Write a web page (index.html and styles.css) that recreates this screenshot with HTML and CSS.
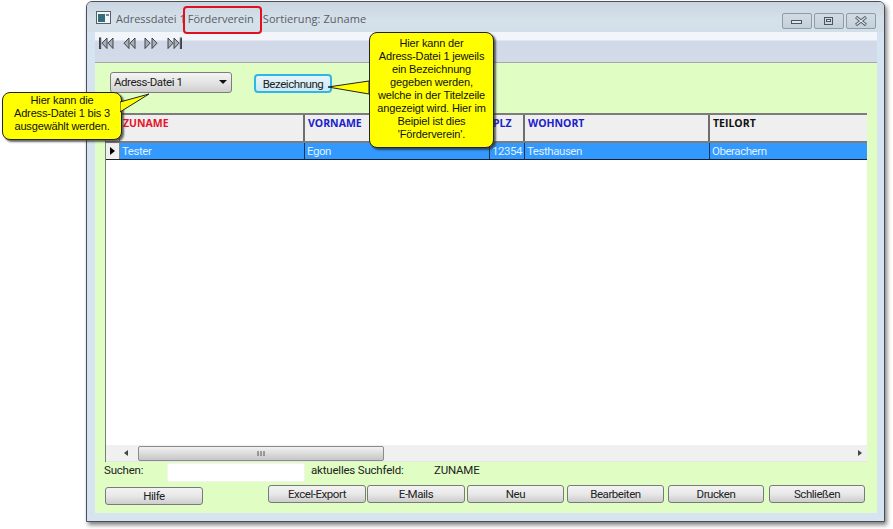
FILE: index.html
```html
<!DOCTYPE html>
<html lang="de">
<head>
<meta charset="utf-8">
<title>Adressdatei</title>
<link rel="stylesheet" href="styles.css">
</head>
<body>
<div class="window">
  <div class="titlebar">
    <svg class="appicon" width="16" height="14" viewBox="0 0 16 14"><rect x="0.5" y="0.5" width="14" height="12" fill="#f4f6f8" stroke="#56606a"/><rect x="2" y="3" width="7" height="8" fill="#2f6f78"/><rect x="10" y="3" width="3" height="2" fill="#7c8790"/></svg>
    <span class="title">Adressdatei 1</span>
    <span class="title t2">Förderverein</span>
    <span class="title t3">Sortierung: Zuname</span>
    <div class="winbtns">
      <div class="winbtn"><svg width="12" height="8" viewBox="0 0 12 8"><rect x="0.5" y="3.5" width="10" height="3" fill="#dfe5ea" stroke="#4b5660"/></svg></div>
      <div class="winbtn"><svg width="12" height="10" viewBox="0 0 12 10"><rect x="1.5" y="1.5" width="8" height="7" fill="none" stroke="#4b5660"/><rect x="3.5" y="3.5" width="4" height="2" fill="#dfe5ea" stroke="#4b5660"/></svg></div>
      <div class="winbtn"><svg width="14" height="10" viewBox="0 0 14 10"><path d="M2 1 L12 9 M12 1 L2 9" stroke="#4b5660" stroke-width="3" fill="none"/><path d="M2.5 1.5 L11.5 8.5 M11.5 1.5 L2.5 8.5" stroke="#e4eaef" stroke-width="1.2" fill="none"/></svg></div>
    </div>
  </div>
  <div class="toolbar">
    <svg class="navicon" width="86" height="13" viewBox="0 0 86 13">
      <g fill="#aab0b8" stroke="#30353b" stroke-width="0.9">
        <rect x="1.5" y="1" width="1.2" height="10.5"/>
        <path d="M9 1 L4 6.2 L9 11.5 Z"/><path d="M15 1 L10 6.2 L15 11.5 Z"/>
        <path d="M31 1 L26 6.2 L31 11.5 Z"/><path d="M37 1 L32 6.2 L37 11.5 Z"/>
        <path d="M47 1 L52 6.2 L47 11.5 Z"/><path d="M54 1 L59 6.2 L54 11.5 Z"/>
        <path d="M70 1 L75 6.2 L70 11.5 Z"/><path d="M76 1 L81 6.2 L76 11.5 Z"/>
        <rect x="82.3" y="1" width="1.2" height="10.5"/>
      </g>
    </svg>
  </div>
  <div class="content">
    <div class="controls">
      <div class="select"><span>Adress-Datei 1</span><i class="caret"></i></div>
      <div class="btn btn-focus">Bezeichnung</div>
    </div>
    <div class="grid">
      <div class="cols head">
        <div class="rowhead"></div>
        <div class="cell c1 red">ZUNAME</div>
        <div class="cell c2 blue">VORNAME</div>
        <div class="cell c3 blue">PLZ</div>
        <div class="cell c4 blue">WOHNORT</div>
        <div class="cell c5 dark">TEILORT</div>
      </div>
      <div class="cols row">
        <div class="rowhead"><i class="pointer"></i></div>
        <div class="cell c1">Tester</div>
        <div class="cell c2">Egon</div>
        <div class="cell c3">12354</div>
        <div class="cell c4">Testhausen</div>
        <div class="cell c5">Oberachern</div>
      </div>
      <div class="gridbody"></div>
      <div class="hscroll">
        <i class="arrow-l"></i>
        <div class="thumb">
          <svg width="9" height="7" viewBox="0 0 9 7"><path d="M1 1v5M4 1v5M7 1v5" stroke="#555" fill="none"/></svg>
        </div>
        <i class="arrow-r"></i>
      </div>
    </div>
    <div class="searchrow">
      <span class="lbl-search">Suchen:</span>
      <div class="input"></div>
      <span class="lbl-field">aktuelles Suchfeld:</span>
      <span class="lbl-value">ZUNAME</span>
    </div>
    <div class="buttons">
      <div class="btn b-help">Hilfe</div>
      <div class="btn b-a">Excel-Export</div>
      <div class="btn b-b">E-Mails</div>
      <div class="btn b-c">Neu</div>
      <div class="btn b-d">Bearbeiten</div>
      <div class="btn b-e">Drucken</div>
      <div class="btn b-f">Schließen</div>
    </div>
  </div>
</div>

<div class="redbox"></div>

<svg class="tail tail1" width="40" height="22" viewBox="0 0 40 22"><path d="M0 9 L29 1 L0 19 Z" fill="#ffff00" stroke="#222" stroke-width="1"/></svg>
<div class="callout call1">Hier kann die<br>Adress-Datei 1 bis 3<br>ausgewählt werden.</div>
<svg class="tail tail2" width="44" height="16" viewBox="0 0 44 16"><path d="M42 1 L1 7 L42 14 Z" fill="#ffff00" stroke="#222" stroke-width="1"/></svg>
<div class="callout call2">Hier kann der<br>Adress-Datei 1 jeweils<br>ein Bezeichnung<br>gegeben werden,<br>welche in der Titelzeile<br>angezeigt wird. Hier im<br>Beipiel ist dies<br>'Förderverein'.</div>
</body>
</html>
```
FILE: styles.css
```css
* { box-sizing: border-box; }
html, body { margin: 0; height: 100%; }
body {
  background: #fff;
  font-family: Roboto, "Liberation Sans", Arial, sans-serif;
  font-size: 11.5px;
  letter-spacing: -.45px;
  color: #222;
  overflow: hidden;
  padding: 1px 0 0 86px;
}
.window {
  width: 799px;
  height: 521px;
  border: 1px solid #4a4f55;
  border-radius: 6px 6px 0 0;
  background: #d6e3f0;
  box-shadow: 2px 3px 4px rgba(60,60,60,.65);
  display: flex;
  flex-direction: column;
  padding: 0 7px 8px 8px;
}
.titlebar {
  height: 30px;
  margin: 0 -7px 0 -8px;
  padding: 0 8px 0 9px;
  display: flex;
  align-items: center;
  border-radius: 5px 5px 0 0;
  background: linear-gradient(#c9d6e2, #d6e0e9 60%, #d2dfe9);
  flex: none;
}
.appicon { margin-right: 4px; margin-top: 2px; }
.title {
  font-family: "Open Sans", sans-serif;
  font-size: 11px;
  letter-spacing: 0;
  color: #555d66;
  white-space: nowrap;
  padding-top: 3px;
}
.t2 { margin-left: 2px; }
.t3 { margin-left: 9px; letter-spacing: .08px; }
.winbtns { margin-left: auto; display: flex; gap: 2px; align-self: flex-start; margin-top: 11px; }
.winbtn {
  width: 30px;
  height: 16px;
  border: 1px solid #8f9ba6;
  border-radius: 2px;
  background: linear-gradient(#d2dbe3, #c3d0db);
  display: flex;
  align-items: center;
  justify-content: center;
}
.toolbar {
  height: 31px;
  flex: none;
  background: linear-gradient(#f2f5f9 0, #f2f5f9 8px, #d1d9e9 9px, #d3dbe9 100%);
  border-bottom: 1px solid #a3a8ae;
  display: flex;
  align-items: center;
  padding: 0 0 8px 3px;
}
.content {
  flex: 1;
  background: #e0fdc4;
  padding: 9px 11px 0 10px;
  display: flex;
  flex-direction: column;
  min-height: 0;
}
.controls { display: flex; align-items: flex-start; height: 41px; flex: none; padding-left: 5px; }
.select {
  width: 122px;
  height: 21px;
  border: 1px solid #7d7d7d;
  border-radius: 3px;
  background: linear-gradient(#f4f4f4, #e4e4e4 50%, #cfcfcf);
  display: flex;
  align-items: center;
  justify-content: space-between;
  padding: 0 4px 1px 3px;
}
.caret {
  width: 0; height: 0;
  border: 4px solid transparent;
  border-top: 4px solid #111;
  border-bottom: 0;
}
.btn {
  height: 18px;
  border: 1px solid #7a7a7a;
  border-radius: 3px;
  background: linear-gradient(#f3f3f3, #e8e8e8 50%, #cdcdcd);
  display: flex;
  align-items: center;
  justify-content: center;
  color: #222;
  flex: none;
}
.btn-focus {
  width: 78px;
  margin: 2px 0 0 22px;
  border: 2px solid #31b4e6;
  border-radius: 4px;
  background: linear-gradient(#e6f5fb, #cde9f5);
  height: 19px;
}
.grid {
  height: 349px;
  flex: none;
  border-top: 2px solid #7c7c7c;
  border-left: 1px solid #7c7c7c;
  background: #fff;
  display: flex;
  flex-direction: column;
  width: 762px;
}
.cols { display: flex; flex: none; }
.head { height: 28px; background: #efefef; border-bottom: 2px solid #7c7c7c; }
.row { height: 17px; background: #3399ff; color: #dff0ff; border-bottom: 1px solid #123; }
.rowhead { width: 14px; flex: none; background: #efefef; border-right: 1px solid #8a8a8a; display: flex; align-items: center; justify-content: center; }
.cell { padding: 0 0 0 3px; border-right: 2px solid #6e6e6e; white-space: nowrap; overflow: hidden; }
.row .cell { border-right: 1px solid #143456; line-height: 17px; padding-left: 2px; }
.head .cell { font-weight: bold; font-family: "Open Sans", sans-serif; font-size: 10.5px; letter-spacing: 0; line-height: 14px; padding-top: 1px; }
.red { color: #e8142a; }
.blue { color: #1c20cc; }
.dark { color: #111; }
.c1 { width: 185px; }
.c2 { width: 185px; }
.c3 { width: 35px; }
.c4 { width: 185px; }
.c5 { flex: 1; border-right: 0; }
.row .c5 { border-right: 0; }
.pointer { width: 0; height: 0; border: 4px solid transparent; border-left: 5px solid #000; border-right: 0; }
.gridbody { flex: 1; background: #fff; }
.hscroll {
  height: 17px;
  flex: none;
  background: #f0f0f0;
  display: flex;
  align-items: center;
  padding-left: 32px;
  position: relative;
  border-bottom: 1px solid #e6e6e6;
}
.thumb {
  width: 246px;
  height: 15px;
  border: 1px solid #8b8b8b;
  border-radius: 2px;
  background: linear-gradient(#f1f1f1, #dcdcdc 50%, #c6c6c6);
  display: flex;
  align-items: center;
  justify-content: center;
}
.arrow-l { width: 0; height: 0; border: 3.5px solid transparent; border-right: 4px solid #444; border-left: 0; position: absolute; left: 18px; top: 5px; }
.arrow-r { width: 0; height: 0; border: 3.5px solid transparent; border-left: 4px solid #444; border-right: 0; position: absolute; right: 5px; top: 5px; }
.searchrow { height: 22px; flex: none; display: flex; align-items: flex-start; padding-top: 1px; margin-left: -1px; line-height: 15px; letter-spacing: -.2px; }
.lbl-search { width: 63px; flex: none; }
.input { width: 138px; height: 19px; background: #fff; border: 1px solid #f0f6e8; border-radius: 2px; flex: none; }
.lbl-field { margin-left: 6px; width: 123px; flex: none; }
.buttons { display: flex; align-items: flex-start; height: 24px; flex: none; padding-top: 1px; }
.b-help { width: 98px; margin-top: 2px; margin-right: 65px; }
.b-a { width: 98px; }
.b-b { width: 98px; margin-left: 1px; }
.b-c { width: 97px; margin-left: 2px; }
.b-d { width: 97px; margin-left: 3px; }
.b-e { width: 96px; margin-left: 4px; }
.b-f { width: 96px; margin-left: 5px; }

.redbox {
  position: absolute;
  left: 183px;
  top: 6px;
  width: 79px;
  height: 28px;
  border: 2px solid #e0101e;
  border-radius: 4px;
}
.callout {
  position: absolute;
  background: #ffff00;
  border: 1px solid #222;
  border-radius: 8px;
  box-shadow: 2px 2px 2px rgba(40,40,40,.7);
  color: #111;
  font-family: "Liberation Sans", Arial, sans-serif;
  font-size: 11px;
  text-align: center;
  line-height: 13px;
  letter-spacing: -.15px;
}
.call1 { left: 2px; top: 92px; width: 120px; height: 48px; padding-top: 1px; }
.call2 { left: 369px; top: 32px; width: 125px; height: 116px; padding-top: 4px; }
.tail { position: absolute; z-index: 2; }
.tail1 { left: 120px; top: 93px; }
.tail2 { left: 327px; top: 80px; }
```
